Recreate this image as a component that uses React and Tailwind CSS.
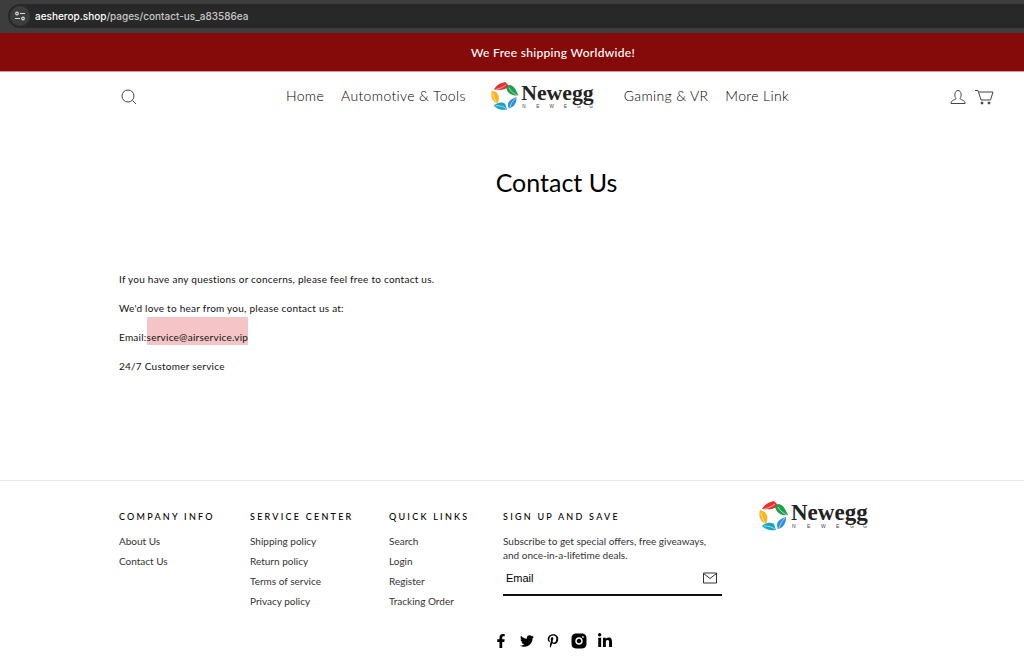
import { useState } from "react";
import { FaFacebookF, FaTwitter, FaPinterestP, FaLinkedinIn } from "react-icons/fa";
import { RiInstagramFill } from "react-icons/ri";

const leftLinks = ["Home", "Automotive & Tools"];
const rightLinks = ["Gaming & VR", "More Link"];

const footerColumns = [
    { title: "COMPANY INFO", links: ["About Us", "Contact Us"] },
    { title: "SERVICE CENTER", links: ["Shipping policy", "Return policy", "Terms of service", "Privacy policy"] },
    { title: "QUICK LINKS", links: ["Search", "Login", "Register", "Tracking Order"] },
];

const socials = [
    { name: "Facebook", Icon: FaFacebookF, size: "size-[14px]" },
    { name: "Twitter", Icon: FaTwitter, size: "size-[14px]" },
    { name: "Pinterest", Icon: FaPinterestP, size: "size-[14px]" },
    { name: "Instagram", Icon: RiInstagramFill, size: "size-[18px]" },
    { name: "LinkedIn", Icon: FaLinkedinIn, size: "size-4" },
];

function Logo({ className }) {
    return (
        <svg viewBox="0 0 112 30" className={className} role="img" aria-label="Newegg">
            {/* five leaves around a pentagon */}
            <path d="M4 8C7 3 11 1 16 0l4 4c-3 4-7 5-16 4Z" fill="#e5322d" />
            <path d="M6 8c5-1 8-3 11-5" stroke="#fff" strokeWidth=".6" fill="none" />
            <path d="M17 6l3-3c6 1 7 5 10 11-6 1-11-1-13-8Z" fill="#1fa04c" />
            <path d="M20 6c2 4 5 6 9 8" stroke="#fff" strokeWidth=".6" fill="none" />
            <path d="M28 16c0 6-2 10-8 12-3-6 1-10 8-12Z" fill="#2a8fe0" />
            <path d="M27 17c-3 3-5 6-6 10" stroke="#fff" strokeWidth=".6" fill="none" />
            <path d="M4 25c4-4 9-4 12-2l2 6C13 30 8 29 4 25Z" fill="#16a5c4" />
            <path d="M6 25c5 0 8 1 11 3" stroke="#fff" strokeWidth=".6" fill="none" />
            <path d="M2 9l5 2c3 4 3 7 1 12C3 21 0 16 2 9Z" fill="#f9b51c" />
            <path d="M3 12c1 4 2 7 4 10" stroke="#fff" strokeWidth=".6" fill="none" />
            <text x="33" y="19" fontFamily="Liberation Serif, serif" fontWeight="700" fontSize="23" fill="#222">Newegg</text>
            <text x="34 49 63 78 92 105" y="27" fontFamily="Liberation Sans, sans-serif" fontSize="5" fill="#444">NEWEGG</text>
        </svg>
    );
}

function SearchIcon() {
    return (
        <svg viewBox="0 0 16 16" className="size-4" fill="none" stroke="#444">
            <circle cx="7" cy="7" r="6" />
            <path d="M11.5 11.5L15 15" />
        </svg>
    );
}

function UserIcon() {
    return (
        <svg viewBox="0 0 16 16" className="size-4" fill="none" stroke="#444">
            <path d="M6 9.5C4 7.500 4.500 1.500 8 1.500s4 6 2 8c0 1.500 5 1 5 5H1c0-4 5-3.500 5-5Z" />
        </svg>
    );
}

function CartIcon() {
    return (
        <svg viewBox="0 0 20 16" className="h-4 w-5" fill="none" stroke="#444">
            <path d="M1 1.500h3l3 9.500h9.500L19 3H4.500" />
            <circle cx="8" cy="14" r="1" fill="#333" />
            <circle cx="15" cy="14" r="1" fill="#333" />
        </svg>
    );
}

function MailIcon() {
    return (
        <svg viewBox="0 0 14 12" className="h-3 w-[14px]" fill="none" stroke="#333">
            <path d="M.5 1h13v10H.5ZM.5 1.500L7 6.500l6.500-5" />
        </svg>
    );
}

function AddressBar() {
    return (
        <div className="bg-[#3d3d3d] pt-1 pb-[5px] pl-2">
            <div className="flex h-6 items-center gap-[5px] rounded-l-full bg-[#282828] pl-[2px]">
                <button aria-label="Site settings" className="flex size-5 items-center justify-center rounded-full bg-[#3d3d3d]">
                    <svg viewBox="0 0 10 10" className="size-[10px]" fill="none" stroke="#ddd" strokeWidth="1.2">
                        <circle cx="2" cy="2.500" r="1.300" />
                        <path d="M5 2.500h5M0 7.500h5" />
                        <circle cx="8" cy="7.500" r="1.300" />
                    </svg>
                </button>
                <span className="font-['Inter',sans-serif] text-[10px] font-medium text-[#c8c8c8]">
                    <span className="text-white">aesherop.shop</span>/pages/contact-us_a83586ea
                </span>
            </div>
        </div>
    );
}

function NavLinks({ links }) {
    return (
        <nav className="flex gap-[17px]">
            {links.map((link) => (
                <a key={link} href="#" className="text-sm font-light whitespace-nowrap tracking-wide">{link}</a>
            ))}
        </nav>
    );
}

function Header() {
    return (
        <header className="flex h-12 items-center justify-between pt-px pr-[30px] pl-[121px] text-black">
            <button aria-label="Search"><SearchIcon /></button>
            <div className="flex items-center gap-6 pr-3">
                <NavLinks links={leftLinks} />
                <a href="#" className="pr-1"><Logo className="w-[106px]" /></a>
                <NavLinks links={rightLinks} />
            </div>
            <div className="flex items-center gap-2">
                <a href="#" aria-label="Account"><UserIcon /></a>
                <a href="#" aria-label="Cart"><CartIcon /></a>
            </div>
        </header>
    );
}

function Footer() {
    const [email, setEmail] = useState("");

    return (
        <footer className="border-t border-[#e8e8e8] pt-5 pr-[30px] pl-[119px] text-[#333]">
            <div className="grid grid-cols-[131fr_139fr_114fr_255fr_236fr]">
                {footerColumns.map((col) => (
                    <div key={col.title} className="pt-2">
                        <h2 className="mb-2 text-[9px] leading-4 font-medium tracking-[0.25em] whitespace-nowrap text-black">{col.title}</h2>
                        <ul>
                            {col.links.map((link) => (
                                <li key={link} className="h-5 text-[10px] leading-4"><a href="#">{link}</a></li>
                            ))}
                        </ul>
                    </div>
                ))}
                <form className="pt-2 pr-9" onSubmit={(e) => e.preventDefault()}>
                    <h2 className="mb-2 text-[9px] leading-4 font-medium tracking-[0.25em] whitespace-nowrap text-black">SIGN UP AND SAVE</h2>
                    <p className="pt-px text-[10px] leading-[14px]">
                        Subscribe to get special offers, free giveaways, and once-in-a-lifetime deals.
                    </p>
                    <div className="flex h-[34px] items-center border-b-2 border-[#111] px-[3px] pr-[5px]">
                        <input
                            type="email"
                            aria-label="Email"
                            placeholder="Email"
                            className="min-w-0 flex-1 font-['Liberation_Sans',sans-serif] text-[11px] outline-none placeholder:text-black"
                            value={email}
                            onChange={(e) => setEmail(e.target.value)}
                        />
                        <button aria-label="Subscribe"><MailIcon /></button>
                    </div>
                </form>
                <a href="#"><Logo className="w-[112px]" /></a>
            </div>
            <div className="flex justify-center gap-[10px] pt-5 pr-2 pb-4 text-black">
                {socials.map(({ name, Icon, size }) => (
                    <a key={name} href="#" aria-label={name} className="flex size-4 items-center justify-center">
                        <Icon className={`shrink-0 ${size}`} />
                    </a>
                ))}
            </div>
        </footer>
    );
}

export default function App() {
    return (
        <div className="min-h-screen bg-white font-['Lato',sans-serif]">
            <AddressBar />
            <div className="border-b border-[#d99] bg-[#850b0a] pt-[2px] pr-9 pl-[118px] text-center text-xs leading-9 font-medium tracking-wide text-white">
                We Free shipping Worldwide!
            </div>
            <Header />

            <main className="pt-[42px] pr-[30px] pb-[106px] pl-[119px]">
                <h1 className="text-center text-[25px] leading-10 text-black">Contact Us</h1>
                <div className="flex flex-col gap-[14px] pt-[70px] text-[10px] leading-[15px] tracking-wide text-[#111]">
                    <p>If you have any questions or concerns, please feel free to contact us.</p>
                    <p>We'd love to hear from you, please contact us at:</p>
                    <p>Email:<a href="#" className="bg-[#f5c4c6] pt-[14px] pb-[2px]">service@airservice.vip</a></p>
                    <p>24/7 Customer service</p>
                </div>
            </main>

            <Footer />
        </div>
    );
}
